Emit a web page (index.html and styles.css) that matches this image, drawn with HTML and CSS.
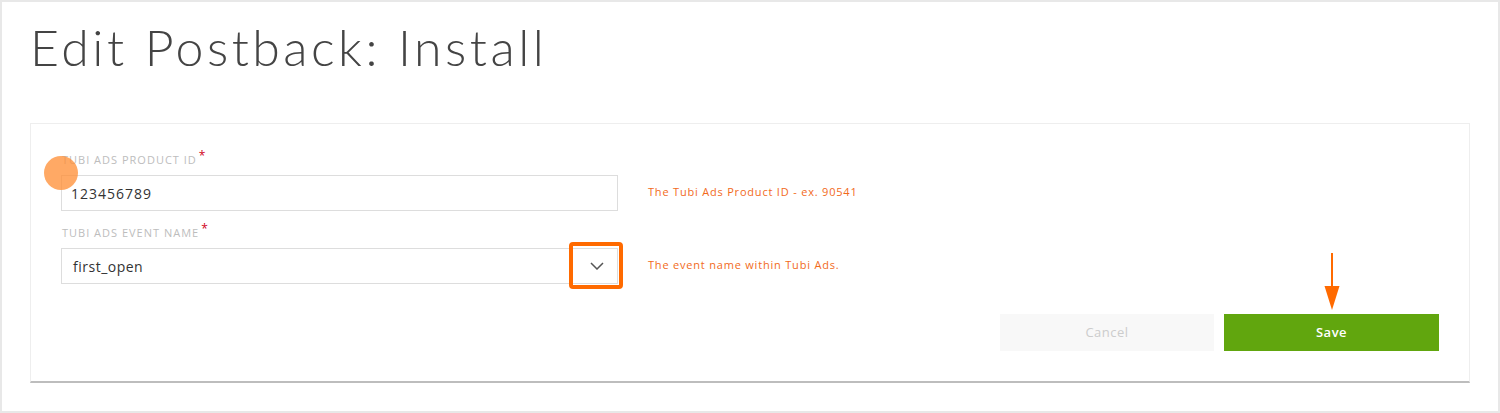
FILE: index.html
```html
<!DOCTYPE html>
<html lang="en">
<head>
<meta charset="utf-8">
<title>Edit Postback: Install</title>
<link rel="stylesheet" href="styles.css">
</head>
<body>
<div class="page">
  <h1 class="title">Edit Postback: Install</h1>
  <section class="card">
    <div class="field">
      <label class="label">Tubi Ads Product ID<span class="req">*</span></label>
      <div class="control">
        <div class="input">123456789</div>
        <span class="dot"></span>
      </div>
      <p class="help">The Tubi Ads Product ID - ex. 90541</p>
    </div>
    <div class="field field-next">
      <label class="label">Tubi Ads Event Name<span class="req">*</span></label>
      <div class="control">
        <div class="input select">
          <span>first_open</span>
          <svg class="chevron" width="14" height="8" viewBox="0 0 14 8" aria-hidden="true">
            <path d="M1 1 L7 7 L13 1" fill="none" stroke="#555" stroke-width="1.5"/>
          </svg>
        </div>
        <span class="highlight"></span>
      </div>
      <p class="help">The event name within Tubi Ads.</p>
    </div>
    <div class="actions">
      <button class="btn btn-cancel" type="button">Cancel</button>
      <button class="btn btn-save" type="button">Save
        <svg class="arrow" width="16" height="57" viewBox="0 0 16 57" aria-hidden="true">
          <line x1="8" y1="0" x2="8" y2="36" stroke="#ff6a00" stroke-width="2"/>
          <polygon points="0.5,33 15.5,33 8,57" fill="#ff6a00"/>
        </svg>
      </button>
    </div>
  </section>
</div>
</body>
</html>
```

FILE: styles.css
```css
html, body {
  margin: 0;
  padding: 0;
  background: #ffffff;
}

.page {
  box-sizing: border-box;
  height: 413px;
  border: 2px solid #e8e8e8;
  padding: 15px 28px 0 28px;
  font-family: "Open Sans", "Liberation Sans", sans-serif;
}

.title {
  margin: 0 0 46px 0;
  font-family: "Lato", "Open Sans", sans-serif;
  font-weight: 300;
  font-size: 50px;
  line-height: 60px;
  color: #444444;
  letter-spacing: 3.5px;
}

.card {
  border: 1px solid #eeeeee;
  border-bottom: 2px solid #bdbdbd;
  padding: 28px 30px 30px 30px;
}

.field {
  display: grid;
  grid-template-columns: 557px 1fr;
  grid-template-rows: 16px 36px;
  row-gap: 7px;
  column-gap: 30px;
}

.field-next {
  margin-top: 14px;
}

.label {
  grid-column: 1;
  grid-row: 1;
  font-size: 11px;
  line-height: 16px;
  text-transform: uppercase;
  color: #bdbdbd;
  letter-spacing: 1px;
  padding-left: 1px;
}

.req {
  color: #d0021b;
  font-size: 12px;
  position: relative;
  top: -4px;
  margin-left: 2px;
}

.control {
  grid-column: 1;
  grid-row: 2;
  position: relative;
}

.input {
  box-sizing: border-box;
  height: 36px;
  border: 1px solid #dddddd;
  padding: 0 10px 0 9px;
  display: flex;
  align-items: center;
  font-size: 14px;
  color: #333333;
  letter-spacing: 1px;
}

.select {
  justify-content: space-between;
  padding-left: 11px;
  padding-right: 13px;
  letter-spacing: 0.5px;
}

.chevron {
  display: block;
}

.help {
  grid-column: 2;
  grid-row: 2;
  align-self: center;
  margin: 0 0 4px 0;
  font-size: 11px;
  color: #f26a1b;
  letter-spacing: 0.8px;
}

.dot {
  position: absolute;
  left: -17px;
  top: -19px;
  width: 34px;
  height: 34px;
  border-radius: 50%;
  background: rgba(255, 140, 50, 0.75);
}

.highlight {
  position: absolute;
  top: -6px;
  bottom: -5px;
  right: -5px;
  width: 54px;
  box-sizing: border-box;
  border: 4px solid #ff6a00;
  border-radius: 4px;
}

.actions {
  margin-top: 30px;
  display: flex;
  justify-content: flex-end;
  gap: 10px;
}

.btn {
  height: 37px;
  border: none;
  font-family: "Open Sans", "Liberation Sans", sans-serif;
  font-size: 13px;
  padding: 0 0 2px 0;
  cursor: pointer;
}

.btn-cancel {
  width: 214px;
  background: #f8f8f8;
  color: #cccccc;
  letter-spacing: 0.5px;
}

.btn-save {
  width: 215px;
  background: #61a60e;
  color: #ffffff;
  font-weight: 600;
  letter-spacing: 0.5px;
  position: relative;
}

.arrow {
  position: absolute;
  left: 50%;
  bottom: 100%;
  margin-left: -8px;
  margin-bottom: 4px;
}
```
